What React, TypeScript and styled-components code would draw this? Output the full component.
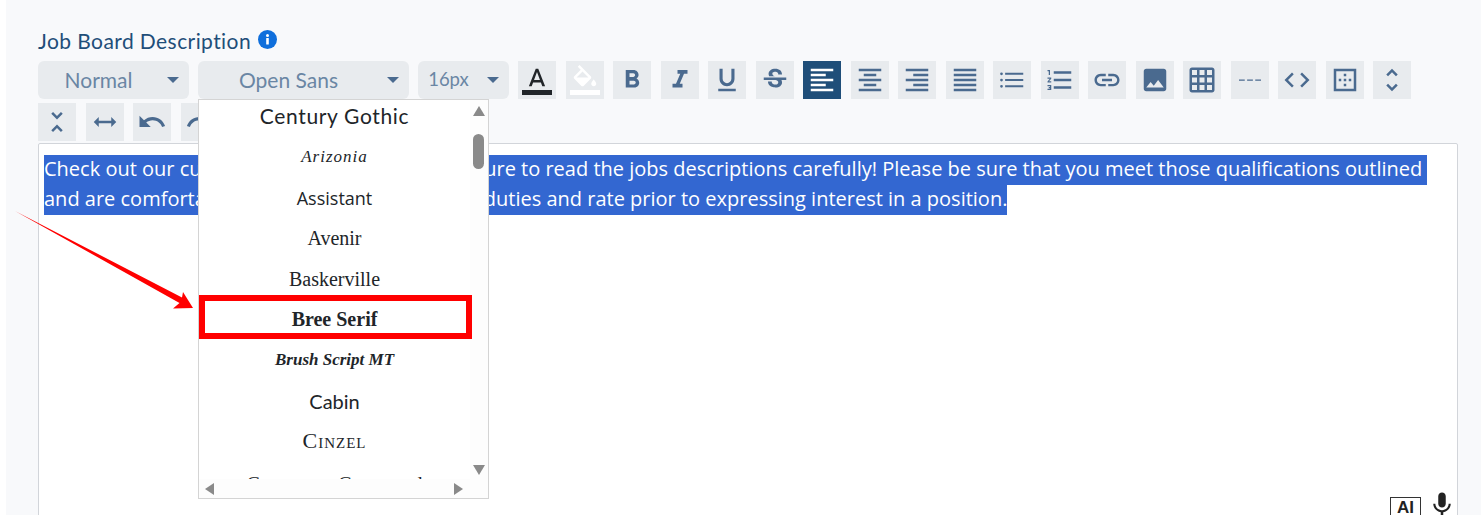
import React from 'react';
import styled, { createGlobalStyle } from 'styled-components';

const GlobalStyle = createGlobalStyle`
  html, body {
    margin: 0;
    padding: 0;
    background: #fff;
    overflow: hidden;
  }
`;

const Panel = styled.div`
  position: relative;
  box-sizing: border-box;
  height: 515px;
  margin-left: 6px;
  padding: 26px 23px 0 32px;
  background: #f8f9fb;
  overflow: hidden;
  font-family: 'Lato', sans-serif;
`;

const LabelRow = styled.div`
  display: flex;
  align-items: center;
  gap: 7px;
  height: 27px;
  margin-bottom: 8px;
`;

const Label = styled.label`
  margin-top: 2px;
  font-size: 21px;
  letter-spacing: 0.42px;
  color: #1f4e79;
`;

const Toolbar = styled.div`
  display: flex;
  flex-wrap: wrap;
  gap: 4px 9.5px;
  max-width: 1390px;
  margin-bottom: 2px;
`;

const Select = styled.div<{ $width: number; $size?: number }>`
  display: flex;
  align-items: center;
  box-sizing: border-box;
  width: ${(p) => p.$width}px;
  height: 38px;
  border-radius: 6px;
  background: #e8ebee;
  color: #6a86a4;
  font-size: ${(p) => p.$size ?? 21}px;
`;

const SelectText = styled.span`
  flex: 1;
  padding-bottom: 2px;
  text-align: center;
`;

const Caret = styled.span`
  width: 0;
  height: 0;
  margin: 0 9.5px 0 8px;
  border-left: 6.5px solid transparent;
  border-right: 6.5px solid transparent;
  border-top: 6px solid #4a6a8f;
`;

const ToolButton = styled.div<{ $active?: boolean; $ink?: string }>`
  display: flex;
  align-items: center;
  justify-content: center;
  width: 38px;
  height: 38px;
  background: ${(p) => (p.$active ? '#1f4e79' : '#e8ebee')};
  color: ${(p) => p.$ink ?? (p.$active ? '#fff' : '#4a6a8f')};
`;

const Editor = styled.div`
  position: relative;
  box-sizing: border-box;
  height: 420px;
  padding: 11px 5px;
  border: 1px solid #d2d5da;
  border-radius: 2px;
  background: #fff;
  font-family: 'Open Sans', sans-serif;
  font-size: 20px;
  line-height: 28px;
  color: #fff;
`;

const SelectedLine = styled.div`
  width: fit-content;
  padding: 0 5px 2px 0;
  background: #3367d1;
  white-space: nowrap;
`;

const LastLine = styled(SelectedLine)`
  padding-right: 0;
`;

const EditorTools = styled.div`
  position: absolute;
  top: 346px;
  right: 0;
  display: flex;
  align-items: flex-start;
  gap: 6px;
  color: #222;
`;

const AiBadge = styled.span`
  box-sizing: border-box;
  width: 31px;
  height: 24px;
  margin-top: 7px;
  border: 1px solid #333;
  background: #fff;
  font-family: 'Liberation Sans', sans-serif;
  font-size: 17px;
  font-weight: 700;
  line-height: 20px;
  text-align: center;
`;

const Dropdown = styled.div`
  position: absolute;
  left: 192px;
  top: 99px;
  box-sizing: border-box;
  width: 291px;
  height: 400px;
  border: 1px solid #d4d4d4;
  background: #fff;
  overflow: hidden;
`;

const FontList = styled.div`
  width: 271px;
  height: 379px;
  overflow: hidden;
`;

const FontOption = styled.div<{
  $family: string;
  $size: number;
  $weight?: number;
  $italic?: boolean;
  $caps?: boolean;
  $spacing?: number;
}>`
  height: 40.6px;
  line-height: 40.6px;
  text-align: center;
  white-space: nowrap;
  color: #212529;
  font-family: ${(p) => p.$family};
  font-size: ${(p) => p.$size}px;
  font-weight: ${(p) => p.$weight ?? 400};
  font-style: ${(p) => (p.$italic ? 'italic' : 'normal')};
  font-variant: ${(p) => (p.$caps ? 'small-caps' : 'normal')};
  letter-spacing: ${(p) => p.$spacing ?? 0}px;

  &:first-child {
    margin-top: -3.6px;
  }

  &:last-child {
    padding-top: 2px;
  }
`;

const VScroll = styled.div`
  position: absolute;
  top: 0;
  right: 0;
  bottom: 0;
  width: 18px;
  background: #fdfdfd;
`;

const HScroll = styled.div`
  position: absolute;
  left: 0;
  right: 0;
  bottom: 0;
  height: 19px;
  background: #fdfdfd;
`;

const Thumb = styled.div`
  position: absolute;
  top: 34px;
  left: 3px;
  width: 11px;
  height: 35px;
  border-radius: 6px;
  background: #8a8a8a;
`;

const ScrollArrow = styled.svg<{ $x: number; $y: number }>`
  position: absolute;
  left: ${(p) => p.$x}px;
  top: ${(p) => p.$y}px;
  fill: #8a8a8a;
`;

const Highlight = styled.div`
  position: absolute;
  left: 193px;
  top: 295px;
  box-sizing: border-box;
  width: 273px;
  height: 44px;
  border: 6.5px solid #f00;
`;

const Pointer = styled.svg`
  position: absolute;
  left: 0;
  top: 200px;
`;

const InfoDot = styled.svg`
  display: block;
`;

const Icon: React.FC<{ d: string }> = ({ d }) => (
  <svg width='30' height='30' viewBox='0 0 24 24' fill='currentColor'>
    <path d={d} />
  </svg>
);

const topTools: { d: string; active?: boolean; ink?: string }[] = [
  { d: 'M11 3L5.5 17h2.25l1.12-3h6.25l1.12 3h2.25L13 3h-2zm-1.38 9L12 5.67 14.38 12H9.62zM0 20h24v4H0z', ink: '#212529' },
  { d: 'M16.56 8.94L7.62 0 6.21 1.41l2.38 2.38-5.15 5.15c-.59.59-.59 1.54 0 2.12l5.5 5.5c.29.29.68.44 1.06.44s.77-.15 1.06-.44l5.5-5.5c.59-.58.59-1.53 0-2.12zM5.21 10L10 5.21 14.79 10H5.21zM19 11.5s-2 2.17-2 3.5c0 1.1.9 2 2 2s2-.9 2-2c0-1.33-2-3.5-2-3.5zM0 20h24v4H0z', ink: '#fff' },
  { d: 'M15.6 10.79c.97-.67 1.65-1.77 1.65-2.79 0-2.26-1.75-4-4-4H7v14h7.04c2.09 0 3.71-1.7 3.71-3.79 0-1.52-.86-2.82-2.15-3.42zM10 6.5h3c.83 0 1.5.67 1.5 1.5s-.67 1.5-1.5 1.5h-3v-3zm3.5 9H10v-3h3.5c.83 0 1.5.67 1.5 1.5s-.67 1.5-1.5 1.5z' },
  { d: 'M10 4v3h2.21l-3.42 8H6v3h8v-3h-2.21l3.42-8H18V4z' },
  { d: 'M12 17c3.31 0 6-2.69 6-6V3h-2.5v8c0 1.93-1.57 3.5-3.5 3.5S8.5 12.93 8.5 11V3H6v8c0 3.31 2.69 6 6 6zm-7 2v2h14v-2H5z' },
  { d: 'M7.24 8.75c-.26-.48-.39-1.03-.39-1.67 0-.61.13-1.16.4-1.67.26-.5.63-.93 1.11-1.29.48-.35 1.05-.63 1.7-.83.66-.19 1.39-.29 2.18-.29.81 0 1.54.11 2.21.34.66.22 1.23.54 1.69.94.47.4.83.88 1.08 1.43.25.55.38 1.15.38 1.81h-3.01c0-.31-.05-.59-.15-.85-.09-.27-.24-.49-.44-.68-.2-.19-.45-.33-.75-.44-.3-.1-.66-.16-1.06-.16-.39 0-.74.04-1.03.13-.29.09-.53.21-.72.36-.19.16-.34.34-.44.55-.1.21-.15.43-.15.66 0 .48.25.88.74 1.21.38.25.77.48 1.41.7H7.39c-.05-.08-.11-.17-.15-.25zM21 12v-2H3v2h9.62c.18.07.4.14.55.2.37.17.66.34.87.51.21.17.35.36.43.57.07.2.11.43.11.69 0 .23-.05.45-.14.66-.09.2-.23.38-.42.53-.19.15-.42.26-.71.35-.29.08-.63.13-1.01.13-.43 0-.83-.04-1.18-.13s-.66-.23-.91-.42c-.25-.19-.45-.44-.59-.75-.14-.31-.25-.76-.25-1.21H6.4c0 .55.08 1.13.24 1.58.16.45.37.85.65 1.21.28.35.6.66.98.92.37.26.78.48 1.22.65.44.17.9.3 1.38.39.48.08.96.13 1.44.13.8 0 1.53-.09 2.18-.28s1.21-.45 1.67-.79c.46-.34.82-.77 1.07-1.27s.38-1.07.38-1.71c0-.6-.1-1.14-.31-1.61-.05-.11-.11-.23-.17-.33H21z' },
  { d: 'M15 15H3v2h12v-2zm0-8H3v2h12V7zM3 13h18v-2H3v2zm0 8h18v-2H3v2zM3 3v2h18V3H3z', active: true },
  { d: 'M7 15v2h10v-2H7zm-4 6h18v-2H3v2zm0-8h18v-2H3v2zm4-6v2h10V7H7zM3 3v2h18V3H3z' },
  { d: 'M3 21h18v-2H3v2zm6-4h12v-2H9v2zm-6-4h18v-2H3v2zm6-4h12V7H9v2zM3 3v2h18V3H3z' },
  { d: 'M3 21h18v-2H3v2zm0-4h18v-2H3v2zm0-4h18v-2H3v2zm0-4h18V7H3v2zm0-6v2h18V3H3z' },
  { d: 'M3.6 5.9a1.1 1.1 0 1 0 0 2.2 1.1 1.1 0 0 0 0-2.2zm0 5a1.1 1.1 0 1 0 0 2.2 1.1 1.1 0 0 0 0-2.2zm0 5a1.1 1.1 0 1 0 0 2.2 1.1 1.1 0 0 0 0-2.2zM6.5 6.2v1.6h14.5V6.2zm0 5v1.6h14.5v-1.6zm0 5v1.6h14.5v-1.6z' },
  { d: 'M2 17h2v.5H3v1h1v.5H2v1h3v-4H2v1zm1-9h1V4H2v1h1v3zm-1 3h1.8L2 13.1v.9h3v-1H3.2L5 10.9V10H2v1zm5-6v2h14V5H7zm0 14h14v-2H7v2zm0-6h14v-2H7v2z' },
  { d: 'M3.9 12c0-1.71 1.39-3.1 3.1-3.1h4V7H7c-2.76 0-5 2.24-5 5s2.24 5 5 5h4v-1.9H7c-1.71 0-3.1-1.39-3.1-3.1zM8 13h8v-2H8v2zm9-6h-4v1.9h4c1.71 0 3.1 1.39 3.1 3.1s-1.39 3.1-3.1 3.1h-4V17h4c2.76 0 5-2.24 5-5s-2.24-5-5-5z' },
  { d: 'M21 19V5c0-1.1-.9-2-2-2H5c-1.1 0-2 .9-2 2v14c0 1.1.9 2 2 2h14c1.1 0 2-.9 2-2zM8.5 13.5l2.5 3.01L14.5 12l4.5 6H5l3.5-4.5z' },
  { d: 'M20 2H4c-1.1 0-2 .9-2 2v16c0 1.1.9 2 2 2h16c1.1 0 2-.9 2-2V4c0-1.1-.9-2-2-2zM8 20H4v-4h4v4zm0-6H4v-4h4v4zm0-6H4V4h4v4zm6 12h-4v-4h4v4zm0-6h-4v-4h4v4zm0-6h-4V4h4v4zm6 12h-4v-4h4v4zm0-6h-4v-4h4v4zm0-6h-4V4h4v4z' },
  { d: 'M3.2 11.5h4.6v1H3.2zm6.5 0h4.6v1H9.7zm6.5 0h4.6v1h-4.6z' },
  { d: 'M9.4 16.6L4.8 12l4.6-4.6L8 6l-6 6 6 6 1.4-1.4zm5.2 0l4.6-4.6-4.6-4.6L16 6l6 6-6 6-1.4-1.4z' },
  { d: 'M13 7h-2v2h2V7zm0 4h-2v2h2v-2zm4 0h-2v2h2v-2zM3 3v18h18V3H3zm16 16H5V5h14v14zm-6-4h-2v2h2v-2zm-4-4H7v2h2v-2z' },
  { d: 'M12 5.83L15.17 9l1.41-1.41L12 3 7.41 7.59 8.83 9 12 5.83zm0 12.34L8.83 15l-1.41 1.41L12 21l4.59-4.59L15.17 15 12 18.17z' },
  { d: 'M7.41 18.59L8.83 20 12 16.83 15.17 20l1.41-1.41L12 14l-4.59 4.59zm9.18-13.18L15.17 4 12 7.17 8.83 4 7.41 5.41 12 10l4.59-4.59z' },
  { d: 'M7 8l-4 4 4 4v-3h10v3l4-4-4-4v3H7z' },
  { d: 'M12.5 8c-2.65 0-5.05.99-6.9 2.6L2 7v9h9l-3.62-3.62c1.39-1.16 3.16-1.88 5.12-1.88 3.54 0 6.55 2.31 7.6 5.5l2.37-.78C21.08 11.03 17.15 8 12.5 8z' },
  { d: 'M18.4 10.6C16.55 8.99 14.15 8 11.5 8c-4.65 0-8.58 3.03-9.96 7.22L3.9 16c1.05-3.19 4.05-5.5 7.6-5.5 1.95 0 3.73.72 5.12 1.88L13 16h9V7l-3.6 3.6z' },
];

const serif = "'Liberation Serif', serif";

const fontOptions = [
  { name: 'Century Gothic', family: "'Lato', sans-serif", size: 21, spacing: 0.65 },
  { name: 'Arizonia', family: serif, size: 17, italic: true, spacing: 1 },
  { name: 'Assistant', family: "'Open Sans', sans-serif", size: 18 },
  { name: 'Avenir', family: serif, size: 20 },
  { name: 'Baskerville', family: serif, size: 20 },
  { name: 'Bree Serif', family: serif, size: 20, weight: 700 },
  { name: 'Brush Script MT', family: serif, size: 17, weight: 700, italic: true },
  { name: 'Cabin', family: "'Lato', sans-serif", size: 20 },
  { name: 'Cinzel', family: serif, size: 22, caps: true, spacing: 1 },
  { name: 'Cormorant Garamond', family: serif, size: 20 },
];

export default function App() {
  return (
    <>
      <GlobalStyle />
      <Panel>
        <LabelRow>
          <Label>Job Board Description</Label>
          <InfoDot width='19' height='19' viewBox='0 0 19 19'>
            <circle cx='9.5' cy='9.5' r='9.5' fill='#0f6fdc' />
            <rect x='8.2' y='8' width='2.6' height='6.6' rx='0.5' fill='#fff' />
            <circle cx='9.5' cy='5.4' r='1.5' fill='#fff' />
          </InfoDot>
        </LabelRow>
        <Toolbar>
          <Select $width={150.5}>
            <SelectText>Normal</SelectText>
            <Caret />
          </Select>
          <Select $width={210.5}>
            <SelectText>Open Sans</SelectText>
            <Caret />
          </Select>
          <Select $width={90.5} $size={18.5}>
            <SelectText>16px</SelectText>
            <Caret />
          </Select>
          {topTools.map((tool, i) => (
            <ToolButton key={i} $active={tool.active} $ink={tool.ink}>
              <Icon d={tool.d} />
            </ToolButton>
          ))}
        </Toolbar>
        <Editor>
          <SelectedLine>
            Check out our current job openings below. Be sure to read the jobs descriptions carefully! Please be sure that you meet those qualifications outlined
          </SelectedLine>
          <LastLine>
            and are comfortable with the new location, job duties and rate prior to expressing interest in a position.
          </LastLine>
          <EditorTools>
            <AiBadge>AI</AiBadge>
            <svg width='30' height='30' viewBox='0 0 24 24' fill='currentColor'>
              <path d='M12 14c1.66 0 2.99-1.34 2.99-3L15 5c0-1.66-1.34-3-3-3S9 3.34 9 5v6c0 1.66 1.34 3 3 3zm5.3-3c0 3-2.54 5.1-5.3 5.1S6.7 14 6.7 11H5c0 3.41 2.72 6.23 6 6.72V21h2v-3.28c3.28-.48 6-3.3 6-6.72h-1.7z' />
            </svg>
          </EditorTools>
        </Editor>
        <Dropdown>
          <FontList>
            {fontOptions.map((f) => (
              <FontOption
                key={f.name}
                $family={f.family}
                $size={f.size}
                $weight={f.weight}
                $italic={f.italic}
                $caps={f.caps}
                $spacing={f.spacing}
              >
                {f.name}
              </FontOption>
            ))}
          </FontList>
          <VScroll>
            <ScrollArrow $x={3} $y={6} width='12' height='10' viewBox='0 0 12 10'>
              <path d='M6 0l6 10H0z' />
            </ScrollArrow>
            <Thumb />
            <ScrollArrow $x={3} $y={365} width='12' height='10' viewBox='0 0 12 10'>
              <path d='M0 0h12L6 10z' />
            </ScrollArrow>
          </VScroll>
          <HScroll>
            <ScrollArrow $x={6} $y={4} width='9' height='12' viewBox='0 0 9 12'>
              <path d='M9 0v12L0 6z' />
            </ScrollArrow>
            <ScrollArrow $x={255} $y={4} width='9' height='12' viewBox='0 0 9 12'>
              <path d='M0 0l9 6-9 6z' />
            </ScrollArrow>
          </HScroll>
        </Dropdown>
        <Highlight />
        <Pointer width='195' height='115' viewBox='0 200 195 115'>
          <path fill='#f00' d='M9 211L176 297.5 177 292 187 308 167 308.5 173.5 303z' />
        </Pointer>
      </Panel>
    </>
  );
}
